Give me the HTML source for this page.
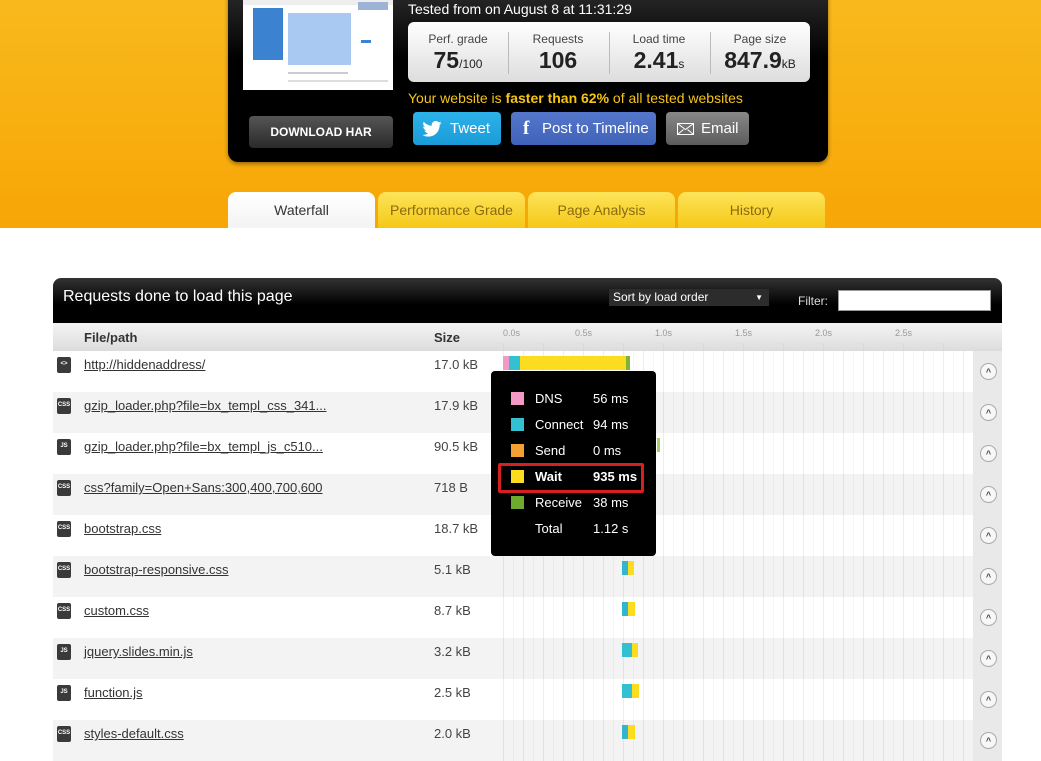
<!DOCTYPE html>
<html><head><meta charset="utf-8"><style>
*{margin:0;padding:0;box-sizing:border-box}
body{width:1041px;height:744px;overflow:hidden;background:#fff;font-family:"Liberation Sans",Arial,sans-serif;position:relative}
.abs{position:absolute}
#top{left:0;top:0;width:1041px;height:228px;background:linear-gradient(#f9b91c,#f7a606)}
#box{left:228px;top:-10px;width:600px;height:172px;background:linear-gradient(#2a2a2a,#000 40%);border-radius:0 0 10px 10px;box-shadow:0 2px 4px rgba(0,0,0,.4)}
#thumb{left:243px;top:0;width:150px;height:90px;background:#fff}
#stats{left:408px;top:22px;width:402px;height:60px;border-radius:6px;background:linear-gradient(#fff,#ddd)}
.st{position:absolute;top:0;width:100px;height:60px;text-align:center;color:#333}
.st .l{font-size:12px;margin-top:10px;color:#444}
.st .v{font-size:23px;font-weight:bold;margin-top:1px;color:#222}
.st .v small{font-size:12px;font-weight:normal}
.sep{position:absolute;top:10px;width:1px;height:42px;background:#bbb}
.btn{position:absolute;border-radius:4px;color:#fff;font-size:15px;line-height:33px}
.tab{position:absolute;top:192px;height:36px;width:147px;border-radius:8px 8px 0 0;background:linear-gradient(#fde45a,#f5c816);color:#8a6a10;font-size:14px;text-align:center;line-height:36px}
#tbl{left:53px;top:278px;width:949px}
#th{height:45px;background:linear-gradient(#333,#000 60%);border-radius:8px 8px 0 0;color:#fff;position:relative}
#ch{height:28px;background:linear-gradient(#f4f4f4,#dcdcdc);position:relative;font-size:13px;font-weight:bold;color:#333}
.row{position:absolute;left:0;width:949px;height:41px;font-size:13px;color:#444}
.row .ic{position:absolute;left:4px;top:6px;width:14px;height:16px;background:#3a3a3a;border-radius:2px;color:#fff;font-size:6px;font-weight:bold;text-align:center;line-height:14px}
.row .f{position:absolute;left:31px;top:6px;text-decoration:underline;color:#333}
.row .s{position:absolute;left:381px;top:6px}
.row .r{position:absolute;left:920px;top:0;width:29px;height:41px;background:#e9e9e9}
.row .r i{position:absolute;left:7px;top:12px;width:17px;height:17px;border:1px solid #aaa;border-radius:50%;background:#f7f7f7;font-style:normal;font-size:9px;font-weight:bold;text-align:center;line-height:17px;color:#444}
.bar{position:absolute;top:5px;height:14px}
.tl{position:absolute;left:450px;top:0;width:470px;height:41px;background:repeating-linear-gradient(90deg,rgba(0,0,0,.07) 0 1px,transparent 1px 20px),repeating-linear-gradient(90deg,transparent 0 10px,rgba(0,0,0,.035) 10px 11px,transparent 11px 20px)}
#tip{left:491px;top:371px;width:165px;height:185px;background:#000;border-radius:4px;color:#fff;font-size:13px}
.tr{position:absolute;left:20px;height:16px}
.tr b{position:absolute;left:0;top:0;width:13px;height:13px}
.tr span{position:absolute;left:24px;top:-1px}
.tr em{position:absolute;left:82px;top:-1px;font-style:normal;white-space:nowrap}
</style></head><body>
<div id="top" class="abs"></div>
<div id="box" class="abs"></div>
<div id="thumb" class="abs">
 <div class="abs" style="left:0;top:0;width:150px;height:5px;background:#eee"></div>
 <div class="abs" style="left:10px;top:8px;width:30px;height:52px;background:#3b82d0"></div>
 <div class="abs" style="left:45px;top:13px;width:63px;height:52px;background:#a9c8f2"></div>
 <div class="abs" style="left:115px;top:2px;width:30px;height:8px;background:#9cb3d6"></div>
 <div class="abs" style="left:118px;top:40px;width:10px;height:3px;background:#3b82d0"></div>
 <div class="abs" style="left:45px;top:72px;width:60px;height:2px;background:#ccc"></div>
 <div class="abs" style="left:45px;top:80px;width:100px;height:2px;background:#ddd"></div>
</div>
<div class="abs" style="left:408px;top:1px;color:#fff;font-size:14px">Tested from on August 8 at 11:31:29</div>
<div id="stats" class="abs">
 <div class="st" style="left:0"><div class="l">Perf. grade</div><div class="v">75<small>/100</small></div></div>
 <div class="sep" style="left:100px"></div>
 <div class="st" style="left:100px"><div class="l">Requests</div><div class="v">106</div></div>
 <div class="sep" style="left:201px"></div>
 <div class="st" style="left:201px"><div class="l">Load time</div><div class="v">2.41<small>s</small></div></div>
 <div class="sep" style="left:302px"></div>
 <div class="st" style="left:302px"><div class="l">Page size</div><div class="v">847.9<small>kB</small></div></div>
</div>
<div class="abs" style="left:408px;top:90px;color:#f7c418;font-size:14px">Your website is <b>faster than 62%</b> of all tested websites</div>
<div class="btn" style="left:249px;top:116px;width:144px;height:32px;background:linear-gradient(#555,#2a2a2a);font-size:12px;font-weight:bold;text-align:center;line-height:32px">DOWNLOAD HAR</div>
<div class="btn" style="left:413px;top:112px;width:88px;height:33px;background:linear-gradient(#2eb2ea,#1a9bd8)"><svg class="abs" style="left:9px;top:9px" width="20" height="16" viewBox="0 0 24 20"><path fill="#fff" d="M24 2.4a10 10 0 0 1-2.8.8A5 5 0 0 0 23.3.4a10 10 0 0 1-3.1 1.2A4.9 4.9 0 0 0 11.8 6 14 14 0 0 1 1.7.9a4.9 4.9 0 0 0 1.5 6.6A4.9 4.9 0 0 1 1 6.9a4.9 4.9 0 0 0 3.9 4.8 5 5 0 0 1-2.2.1 4.9 4.9 0 0 0 4.6 3.4A9.9 9.9 0 0 1 0 17.3 14 14 0 0 0 7.5 19.5c9 0 14-7.5 14-14v-.6A10 10 0 0 0 24 2.4z"/></svg><span class="abs" style="left:37px">Tweet</span></div>
<div class="btn" style="left:511px;top:112px;width:145px;height:33px;background:linear-gradient(#5577cc,#3f63b8)"><span class="abs" style="left:12px;font-weight:bold;font-size:19px;font-family:'Liberation Serif',serif">f</span><span class="abs" style="left:31px">Post to Timeline</span></div>
<div class="btn" style="left:666px;top:112px;width:83px;height:33px;background:linear-gradient(#888,#5c5c5c)"><svg class="abs" style="left:11px;top:11px" width="17" height="12" viewBox="0 0 17 12"><rect x=".5" y=".5" width="16" height="11" fill="none" stroke="#fff"/><path d="M.5.5l8 6 8-6M.5 11.5l6-5M16.5 11.5l-6-5" stroke="#fff" fill="none"/></svg><span class="abs" style="left:35px">Email</span></div>
<div class="tab" style="left:228px;background:linear-gradient(#fff,#f3f3f3);color:#333">Waterfall</div>
<div class="tab" style="left:378px">Performance Grade</div>
<div class="tab" style="left:528px">Page Analysis</div>
<div class="tab" style="left:678px">History</div>

<div id="tbl" class="abs">
 <div id="th"><span class="abs" style="left:10px;top:10px;font-size:16px">Requests done to load this page</span>
  <div class="abs" style="left:556px;top:11px;width:160px;height:17px;background:#2c2c2c;font-size:12px;line-height:17px;padding-left:4px">Sort by load order<span class="abs" style="right:6px;font-size:8px">▼</span></div>
  <span class="abs" style="left:745px;top:16px;font-size:12px;color:#ddd">Filter:</span>
  <div class="abs" style="left:785px;top:12px;width:153px;height:21px;background:#fff;border:1px solid #999"></div></div>
 <div id="ch"><span class="abs" style="left:31px;top:7px">File/path</span><span class="abs" style="left:381px;top:7px">Size</span>
  <div class="abs" style="left:450px;top:0;width:470px;height:28px;font-size:9px;font-weight:normal;color:#999">
   <span class="abs" style="left:0;top:5px">0.0s</span><span class="abs" style="left:72px;top:5px">0.5s</span><span class="abs" style="left:152px;top:5px">1.0s</span><span class="abs" style="left:232px;top:5px">1.5s</span><span class="abs" style="left:312px;top:5px">2.0s</span><span class="abs" style="left:392px;top:5px">2.5s</span>
   <div class="abs" style="left:0;top:20px;width:470px;height:8px;background:repeating-linear-gradient(90deg,#d8d8d8 0 1px,transparent 1px 40px)"></div></div></div>
 <div class="abs" style="left:0;top:73px;width:949px;height:393px">
  <div class="row" style="top:0;background:#fff"><div class="tl"></div><div class="ic">&lt;&gt;</div><div class="f">http://hiddenaddress/</div><div class="s">17.0 kB</div>
   <div class="bar" style="left:450px;width:6px;background:#f29ac5"></div><div class="bar" style="left:456px;width:11px;background:#33c0d3"></div><div class="bar" style="left:467px;width:106px;background:#fbdc1f"></div><div class="bar" style="left:573px;width:4px;background:#7fb23a"></div><div class="r"><i>^</i></div></div>
  <div class="row" style="top:41px;background:#f3f3f3"><div class="tl"></div><div class="ic">CSS</div><div class="f">gzip_loader.php?file=bx_templ_css_341...</div><div class="s">17.9 kB</div><div class="r"><i>^</i></div></div>
  <div class="row" style="top:82px;background:#fff"><div class="tl"></div><div class="ic">JS</div><div class="f">gzip_loader.php?file=bx_templ_js_c510...</div><div class="s">90.5 kB</div><div class="bar" style="left:604px;width:3px;background:#a6cf6a"></div><div class="r"><i>^</i></div></div>
  <div class="row" style="top:123px;background:#f3f3f3"><div class="tl"></div><div class="ic">CSS</div><div class="f">css?family=Open+Sans:300,400,700,600</div><div class="s">718 B</div><div class="r"><i>^</i></div></div>
  <div class="row" style="top:164px;background:#fff"><div class="tl"></div><div class="ic">CSS</div><div class="f">bootstrap.css</div><div class="s">18.7 kB</div><div class="r"><i>^</i></div></div>
  <div class="row" style="top:205px;background:#f3f3f3"><div class="tl"></div><div class="ic">CSS</div><div class="f">bootstrap-responsive.css</div><div class="s">5.1 kB</div><div class="bar" style="left:569px;width:6px;background:#33b5cf"></div><div class="bar" style="left:575px;width:6px;background:#fbdc1f"></div><div class="r"><i>^</i></div></div>
  <div class="row" style="top:246px;background:#fff"><div class="tl"></div><div class="ic">CSS</div><div class="f">custom.css</div><div class="s">8.7 kB</div><div class="bar" style="left:569px;width:6px;background:#33b5cf"></div><div class="bar" style="left:575px;width:7px;background:#fbdc1f"></div><div class="r"><i>^</i></div></div>
  <div class="row" style="top:287px;background:#f3f3f3"><div class="tl"></div><div class="ic">JS</div><div class="f">jquery.slides.min.js</div><div class="s">3.2 kB</div><div class="bar" style="left:569px;width:10px;background:#33c0d3"></div><div class="bar" style="left:579px;width:6px;background:#fbdc1f"></div><div class="r"><i>^</i></div></div>
  <div class="row" style="top:328px;background:#fff"><div class="tl"></div><div class="ic">JS</div><div class="f">function.js</div><div class="s">2.5 kB</div><div class="bar" style="left:569px;width:10px;background:#33c0d3"></div><div class="bar" style="left:579px;width:7px;background:#fbdc1f"></div><div class="r"><i>^</i></div></div>
  <div class="row" style="top:369px;background:#f3f3f3"><div class="tl"></div><div class="ic">CSS</div><div class="f">styles-default.css</div><div class="s">2.0 kB</div><div class="bar" style="left:569px;width:6px;background:#33b5cf"></div><div class="bar" style="left:575px;width:7px;background:#fbdc1f"></div><div class="r"><i>^</i></div></div>
 </div>
</div>

<div id="tip" class="abs">
 <div class="tr" style="top:21px"><b style="background:#f29ac5"></b><span>DNS</span><em>56 ms</em></div>
 <div class="tr" style="top:47px"><b style="background:#33c0d3"></b><span>Connect</span><em>94 ms</em></div>
 <div class="tr" style="top:73px"><b style="background:#f2a132"></b><span>Send</span><em>0 ms</em></div>
 <div class="abs" style="left:7px;top:92px;width:146px;height:30px;border:3px solid #d71f1f;border-radius:2px"></div>
 <div class="tr" style="top:99px;font-weight:bold"><b style="background:#fbdc1f"></b><span>Wait</span><em>935 ms</em></div>
 <div class="tr" style="top:125px"><b style="background:#6eaa2e"></b><span>Receive</span><em>38 ms</em></div>
 <div class="tr" style="top:151px"><span>Total</span><em>1.12 s</em></div>
</div>
</body></html>
